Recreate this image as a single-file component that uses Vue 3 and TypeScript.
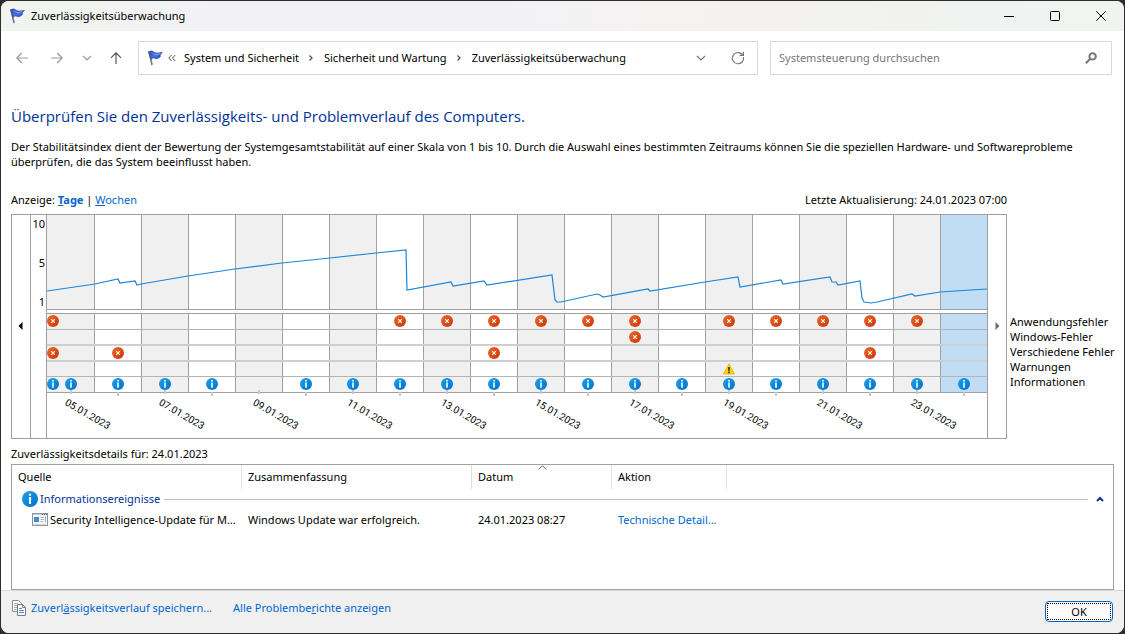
<script setup lang="ts">
import { ref } from 'vue'

type Kind = 'error' | 'warning' | 'info'

interface EventRow {
  name: string
  kind: Kind
  days: number[]
  earlier: boolean
}

const dayCount = 20
const days = Array.from({ length: dayCount }, (_, i) => ({
  index: i,
  label: `${String(i + 5).padStart(2, '0')}.01.2023`,
}))
const selected = ref(19)

const rows: EventRow[] = [
  { name: 'Anwendungsfehler', kind: 'error', days: [7, 8, 9, 10, 11, 12, 14, 15, 16, 17, 18], earlier: true },
  { name: 'Windows-Fehler', kind: 'error', days: [12], earlier: false },
  { name: 'Verschiedene Fehler', kind: 'error', days: [1, 9, 17], earlier: true },
  { name: 'Warnungen', kind: 'warning', days: [14], earlier: false },
  {
    name: 'Informationen',
    kind: 'info',
    days: [0, 1, 2, 3, 5, 6, 7, 8, 9, 10, 11, 12, 13, 14, 15, 16, 17, 18, 19],
    earlier: true,
  },
]

const stability: [number, number][] = [
  [0, 76], [48, 69], [71, 64], [73, 68], [88, 66], [90, 70], [94, 69], [141, 61], [188, 54], [235, 48],
  [283, 43], [329, 38], [359, 35], [360, 75], [404, 67], [406, 71], [437, 66], [440, 70], [505, 60],
  [508, 85], [510, 87], [514, 87], [550, 79], [553, 80], [556, 82], [601, 74], [603, 76], [658, 67],
  [691, 62], [693, 72], [734, 65], [736, 69], [783, 62], [785, 67], [789, 67], [791, 70], [813, 66],
  [815, 83], [817, 87], [824, 88], [830, 87], [865, 79], [868, 81], [893, 77], [940, 74],
]
const linePoints = stability.map((p) => p.join(',')).join(' ')

const crumbs = ['System und Sicherheit', 'Sicherheit und Wartung', 'Zuverlässigkeitsüberwachung']
</script>

<template>
  <div class="desktop">
    <div class="window">
      <svg class="defs" width="0" height="0" aria-hidden="true">
        <defs>
          <linearGradient id="blueFlag" x1="0" y1="0" x2="1" y2="1">
            <stop offset="0" stop-color="#1c37ae" />
            <stop offset="0.5" stop-color="#4a76e2" />
            <stop offset="1" stop-color="#1d3db8" />
          </linearGradient>
          <linearGradient id="infoFill" x1="0" y1="0" x2="1" y2="1">
            <stop offset="0" stop-color="#1ba1e8" />
            <stop offset="1" stop-color="#0070cc" />
          </linearGradient>
          <linearGradient id="errorFill" x1="0" y1="0" x2="1" y2="1">
            <stop offset="0" stop-color="#f0682e" />
            <stop offset="1" stop-color="#c93700" />
          </linearGradient>
          <symbol id="flag" viewBox="0 0 16 16">
            <path d="M1 1.200 L2.200 .8 L6 14.600 L4.600 15.200 Z" fill="#8b939c" />
            <path d="M1 1.200 L1.600 1 L5.200 15 L4.600 15.200 Z" fill="#555d66" />
            <path d="M2.300 1.600 C4 .6 5.600 1 7 2.200 C9 3.600 11.500 2.800 15.400 2.600 C13.600 3.800 13 5 13.400 6.600 C11.500 8.200 9.800 9.400 7.600 8.200 C6.200 7.500 5 8.200 4.200 9.400 Z" fill="url(#blueFlag)" stroke="#1d34a0" stroke-width=".6" />
            <path d="M4 3 C6 2.500 7 4.500 9 4.600 C10.500 4.600 12 3.800 13 3.600" fill="none" stroke="#8fb0f5" stroke-width=".8" />
          </symbol>
          <symbol id="info" viewBox="0 0 12 12">
            <circle cx="6" cy="6" r="6" fill="url(#infoFill)" />
            <rect x="5.200" y="2" width="1.600" height="1.600" fill="#fff" />
            <rect x="5.200" y="4.500" width="1.600" height="5.200" fill="#fff" />
          </symbol>
          <symbol id="error" viewBox="0 0 12 12">
            <circle cx="6" cy="6" r="6" fill="url(#errorFill)" />
            <path d="M4.200 4.200 L7.800 7.800 M7.800 4.200 L4.200 7.800" stroke="#fff" stroke-width="1.200" />
          </symbol>
          <symbol id="warning" viewBox="0 0 12 12">
            <path d="M6 .8 L11.500 11 H.5 Z" fill="#fcd116" stroke="#e8ae00" stroke-width=".8" stroke-linejoin="round" />
            <path d="M6 4 V7.800 M6 8.600 V10.200" stroke="#2b2200" stroke-width="1.500" />
          </symbol>
        </defs>
      </svg>

      <header class="titlebar">
        <svg class="icon16"><use href="#flag" /></svg>
        <h1>Zuverlässigkeitsüberwachung</h1>
        <div class="caption">
          <button type="button" aria-label="Minimieren">
            <svg viewBox="0 0 10 10"><path d="M0 5.500 H10" /></svg>
          </button>
          <button type="button" aria-label="Maximieren">
            <svg viewBox="0 0 10 10"><rect x=".5" y=".5" width="9" height="9" rx="1" /></svg>
          </button>
          <button type="button" aria-label="Schließen">
            <svg viewBox="0 0 10 10"><path d="M.3 .3 L9.700 9.700 M9.700 .3 L.3 9.700" /></svg>
          </button>
        </div>
      </header>

      <div class="navbar">
        <div class="history">
          <button type="button" class="dim back" aria-label="Zurück">
            <svg viewBox="0 0 12 12"><path d="M12 6 H.8 M5.800 1 L.8 6 L5.800 11" /></svg>
          </button>
          <button type="button" class="dim forward" aria-label="Vorwärts">
            <svg viewBox="0 0 12 12"><path d="M0 6 H11.200 M6.200 1 L11.200 6 L6.200 11" /></svg>
          </button>
          <button type="button" class="dim recent" aria-label="Zuletzt besuchte Orte">
            <svg viewBox="0 0 12 12"><path d="M2 4 L6 8 L10 4" /></svg>
          </button>
          <button type="button" class="up" aria-label="Nach oben">
            <svg viewBox="0 0 12 12"><path d="M6 12 V.8 M1 5.800 L6 .8 L11 5.800" /></svg>
          </button>
        </div>
        <nav class="address" aria-label="Adresse">
          <svg class="icon16"><use href="#flag" /></svg>
          <svg class="more" viewBox="0 0 8 8"><path d="M3.500 1 L.8 4 L3.500 7 M7.200 1 L4.500 4 L7.200 7" /></svg>
          <template v-for="(crumb, i) in crumbs" :key="crumb">
            <svg v-if="i > 0" class="sep" viewBox="0 0 6 8"><path d="M1.500 1.500 L4 4 L1.500 6.500" /></svg>
            <a href="#">{{ crumb }}</a>
          </template>
          <button type="button" class="drop" aria-label="Vorherige Orte">
            <svg viewBox="0 0 12 12"><path d="M2 4 L6 8 L10 4" /></svg>
          </button>
          <button type="button" class="refresh" aria-label="Aktualisieren">
            <svg viewBox="0 0 14 14"><path d="M12.500 6.200 A5.600 5.600 0 1 1 10.500 2.800 L12.300 4.300 M12.400 .8 V4.400 H8.800" /></svg>
          </button>
        </nav>
        <label class="search">
          <input type="search" placeholder="Systemsteuerung durchsuchen" aria-label="Systemsteuerung durchsuchen" />
          <svg viewBox="0 0 12 12"><circle cx="7.600" cy="4.400" r="3.200" /><path d="M5.200 6.800 L.8 11.200" /></svg>
        </label>
      </div>

      <main>
        <h2>Überprüfen Sie den Zuverlässigkeits- und Problemverlauf des Computers.</h2>
        <p class="intro">
          Der Stabilitätsindex dient der Bewertung der Systemgesamtstabilität auf einer Skala von 1 bis 10. Durch die
          Auswahl eines bestimmten Zeitraums können Sie die speziellen Hardware- und Softwareprobleme überprüfen, die
          das System beeinflusst haben.
        </p>

        <div class="report">
          <div class="chart-side">
            <div class="view">
              <span>Anzeige: <a href="#" class="current"><u>T</u>age</a> | <a href="#"><u>W</u>ochen</a></span>
              <span>Letzte Aktualisierung: 24.01.2023 07:00</span>
            </div>
            <div class="chart">
              <button type="button" class="scroll earlier-days" aria-label="Frühere Tage">
                <svg viewBox="0 0 5 8"><path d="M4.500 0 V8 L.5 4 Z" fill="#000" /></svg>
              </button>
              <div class="scale"><span>10</span><span>5</span><span>1</span></div>
              <div class="field">
                <div class="plot">
                  <button
                    v-for="day in days"
                    :key="day.index"
                    type="button"
                    class="day"
                    :class="{ odd: day.index % 2 === 0, selected: day.index === selected }"
                    :aria-label="day.label"
                    @click="selected = day.index"
                  ></button>
                  <svg class="curve" viewBox="0 0 940 94" preserveAspectRatio="none">
                    <polyline :points="linePoints" />
                  </svg>
                </div>
                <div class="events">
                  <div v-for="row in rows" :key="row.name" class="event-row" :class="row.kind">
                    <div
                      v-for="day in days"
                      :key="day.index"
                      class="cell"
                      :class="{ odd: day.index % 2 === 0, selected: day.index === selected }"
                    >
                      <svg v-if="row.days.includes(day.index)" class="mark"><use :href="'#' + row.kind" /></svg>
                    </div>
                    <svg v-if="row.earlier" class="mark earlier"><use :href="'#' + row.kind" /></svg>
                  </div>
                </div>
                <div class="dates">
                  <div v-for="day in days" :key="day.index" class="date">
                    <span v-if="day.index % 2 === 0">{{ day.label }}</span>
                  </div>
                </div>
              </div>
              <button type="button" class="scroll later-days" aria-label="Spätere Tage">
                <svg viewBox="0 0 5 8"><path d="M.5 0 V8 L4.500 4 Z" fill="#6d6d6d" /></svg>
              </button>
            </div>
          </div>
          <ul class="legend">
            <li v-for="row in rows" :key="row.name">{{ row.name }}</li>
          </ul>
        </div>

        <h3>Zuverlässigkeitsdetails für: 24.01.2023</h3>
        <div class="details">
          <table>
            <colgroup>
              <col class="c-source" />
              <col class="c-summary" />
              <col class="c-date" />
              <col class="c-action" />
              <col />
            </colgroup>
            <thead>
              <tr>
                <th>Quelle</th>
                <th>Zusammenfassung</th>
                <th class="sorted">
                  Datum
                  <svg viewBox="0 0 9 5"><path d="M.7 4.500 L4.500 .7 L8.300 4.500" /></svg>
                </th>
                <th>Aktion</th>
                <td></td>
              </tr>
            </thead>
            <tbody>
              <tr class="group">
                <td colspan="5">
                  <div class="group-line">
                    <svg class="icon16"><use href="#info" /></svg>
                    <span>Informationsereignisse</span>
                    <i></i>
                    <button type="button" aria-label="Gruppe reduzieren">
                      <svg viewBox="0 0 8 6"><path d="M1 5 L4 2 L7 5" /></svg>
                    </button>
                  </div>
                </td>
              </tr>
              <tr class="item">
                <td>
                  <div class="source">
                    <svg viewBox="0 0 16 13">
                      <rect x=".5" y=".5" width="15" height="12" fill="#f6f6f6" stroke="#8f9499" />
                      <path d="M1 1.500 H15" stroke="#c5cbd0" />
                      <path d="M10 1.500 h1 M12 1.500 h1 M14 1.500 h1" stroke="#555" />
                      <rect x="2" y="4" width="5" height="5" fill="#3f8fd0" />
                      <path d="M8.500 4.500 H12 M8.500 6.500 H12 M8.500 8.500 H11" stroke="#a9b8c6" />
                      <path d="M13.500 3.500 V9" stroke="#7fb0dc" />
                      <path d="M2 11.500 H14" stroke="#cdd6de" />
                    </svg>
                    <span>Security Intelligence-Update für M...</span>
                  </div>
                </td>
                <td>Windows Update war erfolgreich.</td>
                <td>24.01.2023 08:27</td>
                <td><a href="#">Technische Detail...</a></td>
                <td></td>
              </tr>
            </tbody>
          </table>
        </div>
      </main>

      <footer>
        <svg class="copy" viewBox="0 0 14 16">
          <path d="M.5 .5 H6.500 L9.500 3.500 V11.500 H.5 Z" fill="#fff" stroke="#8c8c8c" />
          <path d="M2 3.500 H6 M2 5.500 H5 M2 7.500 H5 M2 9.500 H5" stroke="#9db7d5" />
          <path d="M5.500 4.500 H10.500 L13.500 7.500 V15.500 H5.500 Z" fill="#fff" stroke="#7c7c7c" />
          <path d="M10.500 4.500 V7.500 H13.500" fill="none" stroke="#7c7c7c" />
          <path d="M7 8.500 H10 M7 10.500 H12 M7 12.500 H12" stroke="#4a90d9" />
        </svg>
        <a href="#">Zuverl<u>ä</u>ssigkeitsverlauf speichern...</a>
        <a href="#" class="all">Alle Problembe<u>r</u>ichte anzeigen</a>
        <button type="button" class="ok"><span>OK</span></button>
      </footer>
    </div>
  </div>
</template>

<style>
body {
  margin: 0;
  background: #2e2c2e;
}
</style>

<style scoped>
.desktop {
  box-sizing: border-box;
  display: flex;
  min-height: 100vh;
  padding: 1px;
  background: #2e2c2e;
  font-family: "Noto Sans", "Open Sans", sans-serif;
  font-size: 11px;
  line-height: 15px;
  color: #000;
}
.window {
  flex: 1;
  min-width: 0;
  display: flex;
  flex-direction: column;
  overflow: hidden;
  border-radius: 8px;
  background: #fff;
}
.defs {
  position: absolute;
}
button {
  padding: 0;
  border: 0;
  background: none;
  font: inherit;
  color: inherit;
}
a {
  color: #0066cc;
  text-decoration: none;
}
h1,
h2,
h3,
p,
ul {
  margin: 0;
  padding: 0;
  font-size: 11px;
  font-weight: 400;
}
svg {
  flex: none;
  display: block;
}
.icon16 {
  width: 16px;
  height: 16px;
}

.titlebar {
  display: flex;
  align-items: center;
  height: 30px;
  padding-left: 8px;
  background: linear-gradient(90deg, #f1f4ee, #f2f2f5 20%, #f2f2f5 45%, #f5f2f1 60%, #f2f2ef 75%, #f0f3f2 90%, #f1f4ee);
}
.titlebar h1 {
  flex: 1;
  padding: 0 0 2px 6px;
}
.caption {
  display: flex;
}
.caption button {
  display: grid;
  place-items: center;
  width: 46px;
  height: 30px;
}
.caption svg {
  width: 10px;
  height: 10px;
  fill: none;
  stroke: #000;
}

.navbar {
  display: flex;
  align-items: center;
  gap: 12px;
  padding: 10px 12px 0 15px;
}
.history {
  display: flex;
  align-items: center;
  width: 110px;
  color: #555;
}
.history svg,
.drop svg {
  width: 12px;
  height: 12px;
}
.history svg,
.drop svg,
.refresh svg {
  fill: none;
  stroke: currentColor;
  stroke-width: 1.2;
}
.history .dim {
  color: #999;
}
.forward {
  margin-left: 23px;
}
.recent {
  margin-left: 18px;
}
.up {
  margin-left: 17px;
}
.address,
.search {
  box-sizing: border-box;
  display: flex;
  align-items: center;
  height: 34px;
  border: 1px solid #d9d9d9;
}
.address {
  flex: 620 1 620px;
  padding: 0 12px 0 8px;
}
.address a {
  padding-bottom: 2px;
  color: #000;
}
.more {
  width: 8px;
  height: 8px;
  margin: 0 8px 0 5px;
  fill: none;
  stroke: #555;
}
.sep {
  width: 6px;
  height: 8px;
  margin: 0 10px 0 9px;
  fill: none;
  stroke: #555;
  stroke-width: 1.3;
}
.drop {
  margin-left: auto;
  color: #777;
}
.refresh {
  margin-left: 24px;
  color: #777;
}
.refresh svg {
  width: 14px;
  height: 14px;
}
.search {
  flex: 342 1 342px;
  padding: 0 14px 0 8px;
}
.search input {
  flex: 1;
  min-width: 0;
  padding: 0 0 2px;
  border: 0;
  outline: 0;
  background: none;
  font: inherit;
}
.search input::placeholder {
  color: #767676;
}
.search svg {
  width: 12px;
  height: 12px;
  fill: none;
  stroke: #767676;
  stroke-width: 2;
}

main {
  flex: 1;
  display: flex;
  flex-direction: column;
  padding: 31px 10px 0;
}
h2 {
  font-family: "Open Sans", "Noto Sans", sans-serif;
  font-size: 15px;
  line-height: 20px;
  color: #003399;
}
.intro {
  margin-top: 13px;
}
.report {
  display: flex;
  align-items: flex-start;
  margin-top: 23px;
}
.chart-side {
  flex: 1;
  min-width: 0;
}
.view {
  display: flex;
  justify-content: space-between;
}
.current {
  font-weight: 700;
}
.chart {
  display: flex;
  margin-top: 7px;
  border: 1px solid #a0a0a0;
}
.scroll {
  display: grid;
  place-items: center;
  padding-bottom: 2px;
}
.scroll svg {
  width: 5px;
  height: 8px;
}
.earlier-days {
  width: 18px;
  padding-right: 2px;
}
.later-days {
  width: 19px;
  border-left: 1px solid #a0a0a0;
}
.scale {
  display: flex;
  flex-direction: column;
  gap: 24px;
  width: 14px;
  padding: 1px 1px 0 0;
  border-left: 1px solid #a0a0a0;
  text-align: right;
}
.field {
  flex: 1;
  min-width: 0;
  border-left: 1px solid #a0a0a0;
}
.plot {
  position: relative;
  display: flex;
  height: 94px;
  border-bottom: 1px solid #a0a0a0;
}
.day,
.cell {
  box-sizing: border-box;
  flex: 1 1 5%;
  border-left: 1px solid #a0a0a0;
}
.day:first-child,
.cell:first-child {
  border-left: 0;
}
.odd {
  background: #f0f0f0;
}
.selected {
  background: #c0ddf5;
}
.curve {
  position: absolute;
  inset: 0;
  width: 100%;
  height: 100%;
}
.curve polyline {
  fill: none;
  stroke: #1a86d9;
  stroke-width: 1.2;
  vector-effect: non-scaling-stroke;
}
.events {
  margin-top: 3px;
  border-top: 1px solid #a0a0a0;
}
.event-row {
  position: relative;
  display: flex;
  height: 15px;
  border-bottom: 1px solid #b4b4b4;
}
.event-row:nth-child(2),
.event-row:nth-child(3) {
  height: 14px;
  border-bottom: 2px solid #cfcfcf;
}
.event-row.warning {
  height: 14px;
}
.event-row:last-child {
  border-bottom-color: #a0a0a0;
}
.cell {
  display: grid;
  place-items: start center;
  padding-top: 1px;
}
.mark {
  width: 12px;
  height: 12px;
}
.earlier {
  position: absolute;
  left: 0;
  top: 1px;
}
.dates {
  display: flex;
  height: 45px;
}
.date {
  position: relative;
  flex: 1;
}
.date::before {
  content: "";
  position: absolute;
  left: 23px;
  top: -1px;
  width: 2px;
  height: 4px;
  background: #c8c8c8;
}
.date:nth-child(odd)::before {
  top: -3px;
}
.date span {
  position: absolute;
  left: 19px;
  top: 1px;
  transform: rotate(30deg);
  transform-origin: 0 50%;
  font-family: Roboto, "Noto Sans", sans-serif;
  font-size: 10px;
}
.legend {
  width: 107px;
  box-sizing: border-box;
  padding: 122px 0 0 3px;
  list-style: none;
  white-space: nowrap;
}

h3 {
  margin-top: 7px;
}
.details {
  flex: 1;
  margin-top: 3px;
  border: 1px solid #a0a0a0;
}
table {
  width: 100%;
  table-layout: fixed;
  border-collapse: separate;
  border-spacing: 0;
}
.c-source,
.c-summary {
  width: 230px;
}
.c-date {
  width: 140px;
}
.c-action {
  width: 115px;
}
th,
td {
  padding: 0 0 2px 6px;
  text-align: left;
  font-weight: 400;
  white-space: nowrap;
}
th {
  position: relative;
  height: 22px;
  border-right: 1px solid #e0e0e0;
}
.sorted svg {
  position: absolute;
  left: 66px;
  top: 0;
  width: 9px;
  height: 5px;
  fill: none;
  stroke: #666;
}
.group td {
  height: 20px;
  padding: 0 9px 0 10px;
}
.group-line {
  display: flex;
  align-items: center;
  color: #003399;
}
.group-line span {
  padding: 0 4px 2px 2px;
}
.group-line i {
  flex: 1;
  height: 1px;
  background: #b0bfe0;
}
.group-line button {
  margin-left: 8px;
}
.group-line button svg {
  width: 8px;
  height: 6px;
  fill: none;
  stroke: #003399;
  stroke-width: 2;
}
.item td {
  height: 20px;
}
.source {
  display: flex;
  align-items: center;
  gap: 2px;
  padding-left: 14px;
}
.source svg {
  width: 16px;
  height: 13px;
}

footer {
  display: flex;
  align-items: flex-start;
  height: 33px;
  padding: 9px 11px 0 11px;
  border-top: 1px solid #d9d9d9;
  background: #f0f0f0;
}
.copy {
  width: 14px;
  height: 16px;
  margin-right: 5px;
}
.all {
  margin-left: 21px;
}
.ok {
  box-sizing: border-box;
  width: 68px;
  height: 21px;
  margin: 1px 0 0 auto;
  padding: 1px;
  border: 1px solid #0067c0;
  border-radius: 4px;
  background: #fdfdfd;
}
.ok span {
  display: block;
  border: 1px dotted #000;
}
</style>
